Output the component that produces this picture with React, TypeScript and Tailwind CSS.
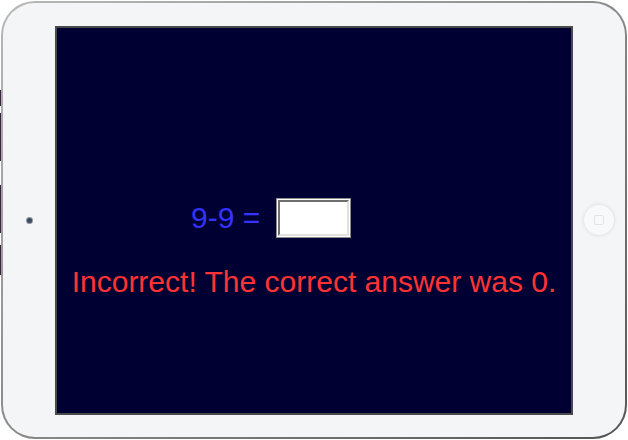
import React from "react";

export default function App() {
  return (
    <div className="w-[628px] h-[440px] bg-white relative overflow-hidden" style={{ fontFamily: '"Liberation Sans", Arial, sans-serif' }}>
      {/* side buttons */}
      <div className="absolute left-0 top-[90px] w-[2px] h-[16px] bg-[#3a2140]" />
      <div className="absolute left-0 top-[113px] w-[2px] h-[48px] bg-[#3a2140]" />
      <div className="absolute left-0 top-[185px] w-[2px] h-[48px] bg-[#3a2140]" />
      <div className="absolute left-0 top-[245px] w-[2px] h-[30px] bg-[#3a2140]" />
      <div className="absolute left-[1px] top-[1px] w-[626px] h-[438px] rounded-[34px] bg-gradient-to-br from-[#b8b8b8] via-[#8a8a8a] to-[#555] p-[2px]">
        <div className="w-full h-full rounded-[32px] bg-[#f4f5f7] flex items-center">
          <div className="w-[52px] flex justify-center">
            <div className="w-[5px] h-[5px] rounded-full bg-[#3d4b5c] ring-1 ring-[#8a949e]" />
          </div>
          <div className="w-[518px] h-[389px] border-2 border-[#4a4a4a] bg-[#000033] flex flex-col">
            <div className="mt-[170px] ml-[134px] flex items-center h-[40px]">
              <span className="text-[30px] text-[#3333ff] leading-none">9-9 =</span>
              <div className="ml-[16px] w-[75px] h-[40px] border border-[#8a8a8a] bg-white p-[1px]">
                <div className="w-full h-full border-2 border-t-[#6e6e6e] border-l-[#6e6e6e] border-r-[#e0e0e0] border-b-[#e0e0e0] bg-white" />
              </div>
            </div>
            <div className="mt-[29px] text-center text-[30px] text-[#ff3333] leading-none">
              Incorrect! The correct answer was 0.
            </div>
          </div>
          <div className="flex-1 flex justify-center">
            <div className="w-[30px] h-[30px] rounded-full bg-[#f8f9fa] shadow-[0_0_4px_rgba(0,0,0,0.12)] flex items-center justify-center">
              <div className="w-[10px] h-[10px] rounded-[2px] border border-[#e2e3e5]" />
            </div>
          </div>
        </div>
      </div>
    </div>
  );
}
